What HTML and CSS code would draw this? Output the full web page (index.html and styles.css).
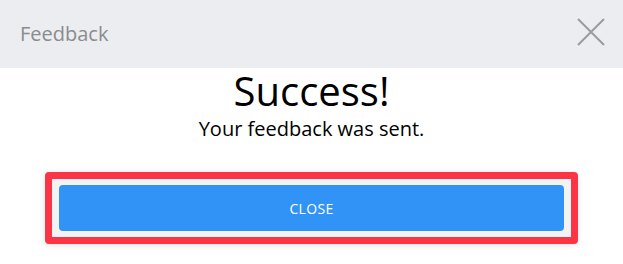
FILE: index.html
```html
<!DOCTYPE html>
<html>
<head>
<meta charset="utf-8">
<link rel="stylesheet" href="styles.css">
</head>
<body>
<div class="modal">
  <div class="modal-header">
    <span class="modal-title">Feedback</span>
    <button class="close-x" aria-label="Close">
      <svg width="28" height="28" viewBox="0 0 28 28"><path d="M1 1 L27 27 M27 1 L1 27" stroke="#9b9b9b" stroke-width="2" fill="none"/></svg>
    </button>
  </div>
  <div class="modal-body">
    <h1 class="success-title">Success!</h1>
    <p class="success-text">Your feedback was sent.</p>
    <div class="highlight">
      <button class="btn-close">CLOSE</button>
    </div>
  </div>
</div>
</body>
</html>
```

FILE: styles.css
```css
html, body {
  margin: 0;
  padding: 0;
  background: #ffffff;
  font-family: "Open Sans", "Liberation Sans", sans-serif;
}
.modal {
  width: 623px;
  height: 264px;
  display: flex;
  flex-direction: column;
}
.modal-header {
  height: 68px;
  background: #ebedf1;
  display: flex;
  align-items: center;
  justify-content: space-between;
  padding: 0 18px 0 20px;
  box-sizing: border-box;
}
.modal-title {
  font-size: 20px;
  color: #8a8b8d;
  margin-bottom: 1px;
}
.close-x {
  border: 0;
  background: none;
  padding: 0;
  width: 28px;
  height: 28px;
  display: flex;
  margin-bottom: 5px;
}
.modal-body {
  display: flex;
  flex-direction: column;
  align-items: center;
}
.success-title {
  margin: 3px 0 0;
  font-weight: 400;
  font-size: 40px;
  line-height: 40px;
  color: #000;
}
.success-text {
  margin: 6px 0 0;
  font-size: 20px;
  line-height: 24px;
  color: #000;
}
.highlight {
  margin-top: 31px;
  width: 533px;
  box-sizing: border-box;
  border: 7px solid #fb3545;
  border-radius: 4px;
  padding: 6px 7px;
  background: #f3f3f4;
  box-shadow: 0 1px 6px rgba(0,0,0,0.12);
}
.btn-close {
  display: block;
  width: 100%;
  height: 46px;
  border: 0;
  border-radius: 4px;
  background: #3193f6;
  color: #ffffff;
  font-family: "Open Sans", "Liberation Sans", sans-serif;
  font-size: 14px;
  letter-spacing: 0.3px;
}
```
